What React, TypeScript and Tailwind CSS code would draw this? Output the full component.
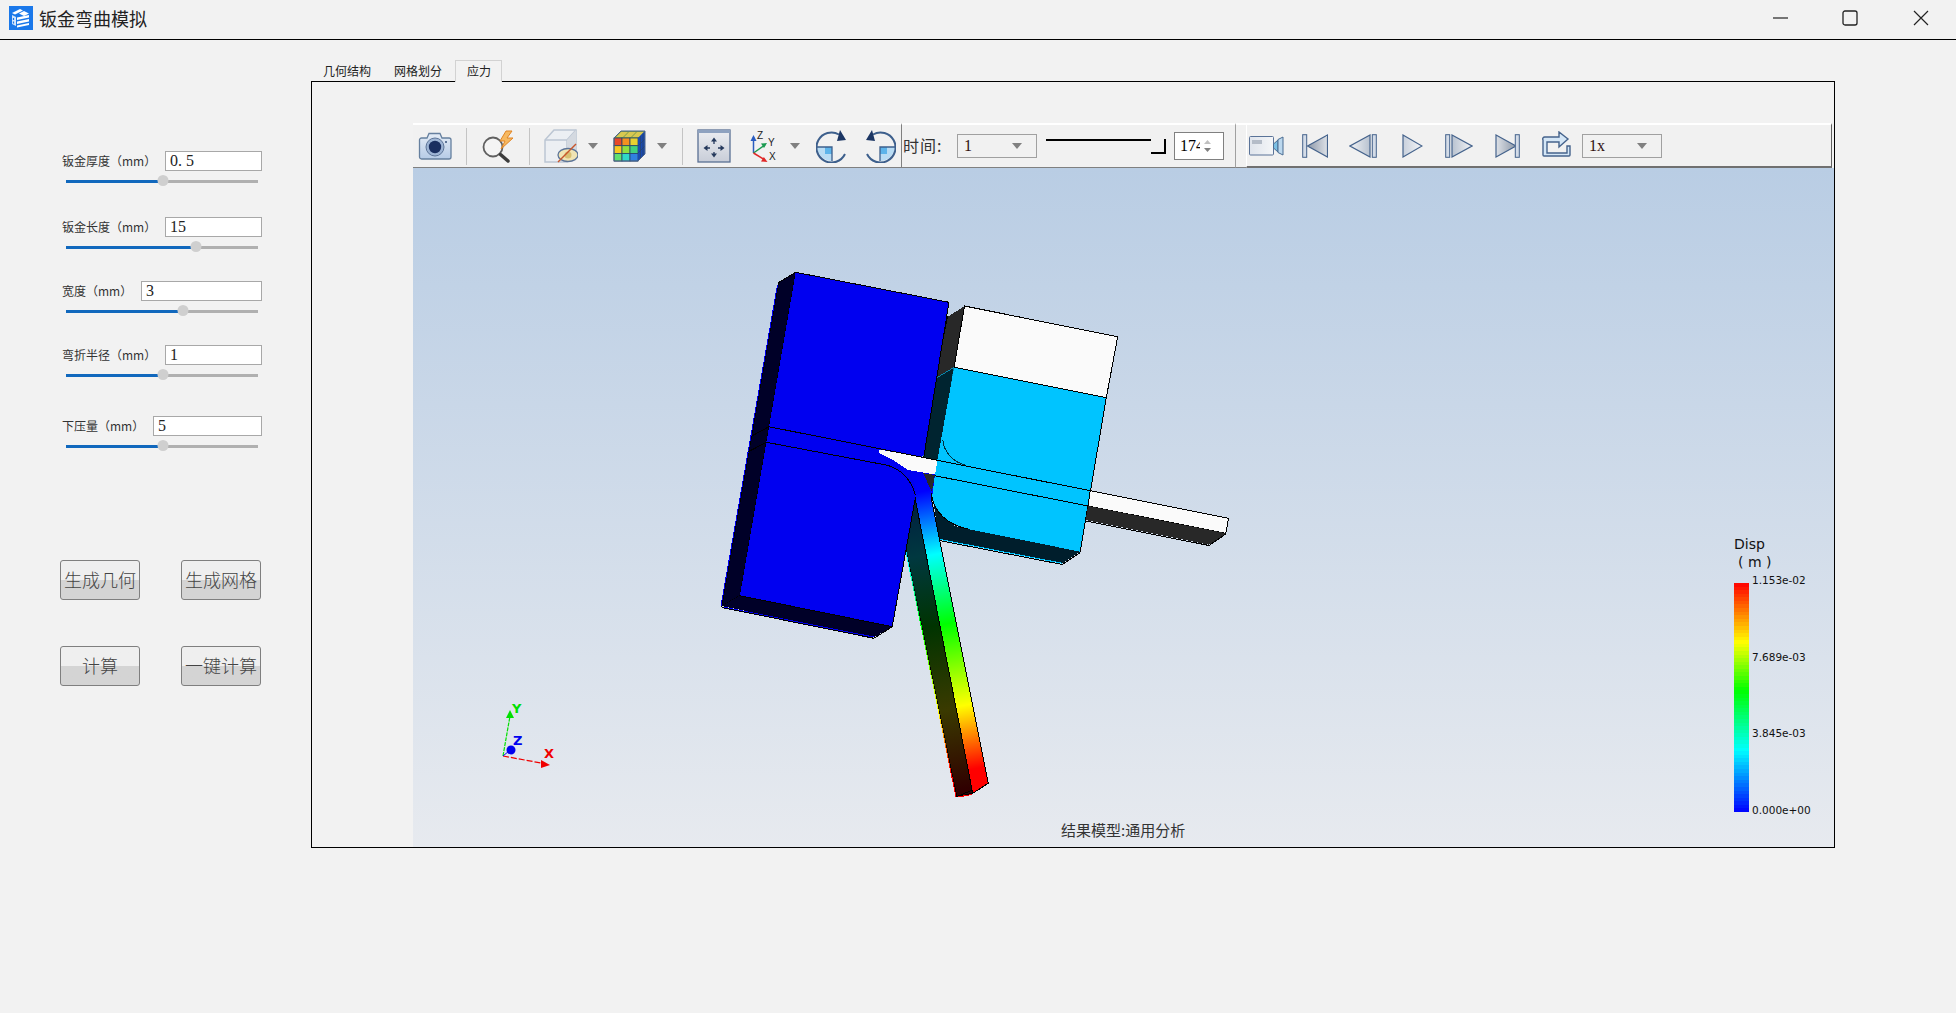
import React from "react";

const CJK = "font-['Noto_Sans_CJK_SC','Liberation_Sans',sans-serif]";
const SERIF = "font-['Liberation_Serif','Noto_Sans_CJK_SC',serif]";

const PARAMS = [
  { label: "钣金厚度（mm）", value: "0. 5", inputWidth: "w-[97px]", top: "mt-0", handle: 97 },
  { label: "钣金长度（mm）", value: "15", inputWidth: "w-[97px]", top: "mt-[26px]", handle: 130 },
  { label: "宽度（mm）", value: "3", inputWidth: "w-[121px]", top: "mt-[24px]", handle: 117 },
  { label: "弯折半径（mm）", value: "1", inputWidth: "w-[97px]", top: "mt-[24px]", handle: 97 },
  { label: "下压量（mm）", value: "5", inputWidth: "w-[109px]", top: "mt-[31px]", handle: 97 },
];

// jet colour ramp for the legend, t = 0 is blue and t = 1 is red
const jet = (t: number) => {
  const stops: [number, number[]][] = [
    [0, [0, 0, 255]],
    [0.27, [0, 255, 255]],
    [0.53, [0, 255, 0]],
    [0.74, [255, 255, 0]],
    [1, [255, 0, 0]],
  ];
  for (let i = 1; i < stops.length; i++) {
    if (t <= stops[i][0]) {
      const [a, ca] = stops[i - 1];
      const [b, cb] = stops[i];
      const k = (t - a) / (b - a);
      return `rgb(${ca.map((c, j) => Math.round(c + (cb[j] - c) * k)).join(",")})`;
    }
  }
  return "rgb(255,0,0)";
};

const Caret = ({ className = "" }: { className?: string }) => (
  <svg width="10" height="6" viewBox="0 0 10 6" className={className}>
    <path d="M0 0H10L5 6Z" fill="#808080" />
  </svg>
);

const Sep = ({ className = "" }: { className?: string }) => (
  <div className={`w-px h-[37px] bg-[#c4c4c4] ${className}`} />
);

const Combo = ({ value, className = "" }: { value: string; className?: string }) => (
  <div className={`w-20 h-6 border border-[#a0a0a0] flex items-center justify-between pl-1.5 pr-3.5 text-base text-[#301010] ${SERIF} ${className}`}>
    <span>{value}</span>
    <Caret />
  </div>
);

const Logo = () => (
  <svg width="24" height="24" viewBox="0 0 24 24" className="ml-[9px]">
    <rect width="24" height="24" fill="#1a78ea" />
    <path d="M3 7 11 3l3 1.500-8 4zM15 5l5 2.500-5 2.500-5-2.500z" fill="#ffffff" />
    <path d="M3 9l4 2v9l-4-2z" fill="#d5e6fb" />
    <path d="M8 11.500 20 9v2.500l-12 2.500zM8 15.500 20 13v2.500l-12 2.500zM8 19.500 20 17v2l-12 2.500z" fill="#ffffff" />
    <path d="M4.500 12v2M4.500 15.500v2" stroke="#1a78ea" strokeWidth="1.200" />
  </svg>
);

const WindowControls = () => (
  <div className="ml-auto flex items-center">
    <svg width="16" height="2" viewBox="0 0 16 2" className="mr-[53px]">
      <path d="M0 1H15" stroke="#222" strokeWidth="1.200" />
    </svg>
    <svg width="16" height="16" viewBox="0 0 16 16" className="mr-[55px]">
      <rect x="1" y="1" width="14" height="14" rx="2" fill="none" stroke="#222" strokeWidth="1.300" />
    </svg>
    <svg width="16" height="16" viewBox="0 0 16 16" className="mr-[27px]">
      <path d="M1 1 15 15M15 1 1 15" stroke="#222" strokeWidth="1.200" />
    </svg>
  </div>
);

const CameraIcon = ({ className = "" }: { className?: string }) => (
  <svg width="34" height="28" viewBox="0 0 34 28" className={className}>
    <defs>
      <linearGradient id="cam" x1="0" y1="0" x2="0" y2="1">
        <stop offset="0" stopColor="#e4ecf6" />
        <stop offset="1" stopColor="#b6cbe6" />
      </linearGradient>
    </defs>
    <path d="M1.500 8a2 2 0 0 1 2-2H9l2-4.500h11L24 6h7a2 2 0 0 1 2 2v17a2 2 0 0 1-2 2H3.500a2 2 0 0 1-2-2z" fill="url(#cam)" stroke="#66809f" strokeWidth="1.300" />
    <circle cx="17" cy="15" r="9" fill="#9db4d4" stroke="#5d7598" />
    <circle cx="17" cy="15" r="6.200" fill="#1a2f60" />
    <rect x="27" y="9" width="2" height="2" fill="#5d7598" />
  </svg>
);

const SearchBolt = ({ className = "" }: { className?: string }) => (
  <svg width="34" height="33" viewBox="0 0 34 33" className={className}>
    <circle cx="12" cy="17" r="9.500" fill="#f4f4f4" stroke="#606060" strokeWidth="1.800" />
    <path d="M19.500 24.500 27 31" stroke="#3c3c3c" strokeWidth="3.500" strokeLinecap="round" />
    <path d="M25 1 19 11h5l-4 8 12-11h-6l5-7z" fill="#f6b860" stroke="#e08424" />
  </svg>
);

const HiddenCube = ({ className = "" }: { className?: string }) => (
  <svg width="34" height="34" viewBox="0 0 34 34" className={className}>
    <path d="M1 11 10 1h22v20l-9 12H1z" fill="#eceff3" stroke="#bcc6d3" strokeWidth="1.500" />
    <path d="M1 11h22v22M23 11l9-10" fill="none" stroke="#bcc6d3" strokeWidth="1.500" />
    <path d="M23 11 32 1v20l-9 12z" fill="#d4d9e0" />
    <ellipse cx="24" cy="26" rx="10" ry="6.500" fill="#f0e4b4" stroke="#5d7598" strokeWidth="1.300" />
    <circle cx="24" cy="26" r="3.500" fill="#d8bf72" />
    <path d="M14 33 32 15" stroke="#c8562c" strokeWidth="1.500" />
  </svg>
);

const ColorCube = ({ className = "" }: { className?: string }) => {
  const cells = [
    ["#e84828", "#f49020", "#e8d030"],
    ["#f8c820", "#90e040", "#40d080"],
    ["#60e070", "#30d8c8", "#3080e0"],
  ];
  return (
    <svg width="33" height="32" viewBox="0 0 33 32" className={className}>
      <path d="M1 8 8 1h24v23l-7 7H1z" fill="#1f4f9e" />
      <path d="M1 8 8 1h24l-7 7z" fill="#7a9a50" />
      <path d="M3 7 8 2h7l-5 5zM11 7l5-5h7l-5 5zM19 7l5-5h7l-5 5z" fill="#d8c850" />
      {cells.map((row, y) =>
        row.map((c, x) => <rect key={`${x}-${y}`} x={1 + x * 8} y={8 + y * 7.700} width="8" height="7.700" fill={c} stroke="#2a4468" strokeWidth="0.800" />),
      )}
      <path d="M25 8 32 1v23l-7 7z" fill="#1a4ab0" />
      <path d="M25 16l7-7M25 23l7-7M27.500 6v22M30 3.500v22" stroke="#2a4468" strokeWidth="0.700" />
      <path d="M1 8 8 1h24v23l-7 7H1z" fill="none" stroke="#4c6488" />
    </svg>
  );
};

const FitView = ({ className = "" }: { className?: string }) => (
  <svg width="34" height="34" viewBox="0 0 34 34" className={className}>
    <defs>
      <linearGradient id="fit" x1="0" y1="0" x2="0" y2="1">
        <stop offset="0" stopColor="#eceef2" />
        <stop offset="1" stopColor="#c8cdd8" />
      </linearGradient>
    </defs>
    <rect x="1" y="1" width="32" height="32" fill="url(#fit)" stroke="#5a7094" strokeWidth="1.300" />
    <rect x="1" y="1" width="32" height="3" fill="#8ea2c0" />
    <path d="M17 12v3M17 23v3M9 19h4M21 19h4" stroke="#25395c" strokeWidth="1.300" />
    <path d="M17 8.500l-3 4h6zM17 28.500l-3-4h6zM6.500 19l4-3v6zM27.500 19l-4-3v6z" fill="#25395c" />
  </svg>
);

const AxesIcon = ({ className = "" }: { className?: string }) => (
  <svg width="28" height="34" viewBox="0 0 28 34" className={className}>
    <path d="M3.500 24V8" stroke="#2a5cc0" strokeWidth="1.500" />
    <path d="M3.500 6 0.500 12h6z" fill="#2a5cc0" />
    <path d="M3.500 24 15 16" stroke="#1a9a50" strokeWidth="1.500" />
    <path d="M17 14l-6 .500 3 4.500z" fill="#1a9a50" />
    <path d="M3.500 24 15 31" stroke="#e02828" strokeWidth="1.500" />
    <path d="M17.500 33l-6.500-.500 2.800-4.500z" fill="#e02828" />
    <text x="7" y="10" fontSize="10" fontFamily="Liberation Sans" fill="#222">Z</text>
    <text x="18" y="17" fontSize="10" fontFamily="Liberation Sans" fill="#222">Y</text>
    <text x="19" y="31" fontSize="10" fontFamily="Liberation Sans" fill="#222">X</text>
  </svg>
);

const RotateCw = ({ className = "", flip = false }: { className?: string; flip?: boolean }) => (
  <svg width="32" height="34" viewBox="0 0 32 34" className={`${flip ? "-scale-x-100" : ""} ${className}`}>
    <path d="M16 18v14a15 15 0 0 1-15-14z" fill="#b8dcf4" />
    <path d="M16 18h-7v7h7z" fill="#5db4ea" />
    <path d="M1 18h15v14" fill="none" stroke="#3d5f8c" strokeWidth="1.300" />
    <path d="M23 5.500A15 15 0 1 0 29 25" fill="none" stroke="#3d5f8c" strokeWidth="2" />
    <path d="M30 11 21 12l3-11z" fill="#1c3664" />
  </svg>
);

const VideoIcon = ({ className = "" }: { className?: string }) => (
  <svg width="35" height="20" viewBox="0 0 35 20" className={className}>
    <defs>
      <linearGradient id="vid" x1="0" y1="0" x2="1" y2="0">
        <stop offset="0" stopColor="#dfe4ec" />
        <stop offset="1" stopColor="#f4f6f8" />
      </linearGradient>
    </defs>
    <rect x="0.500" y="0.500" width="24" height="18.500" rx="1" fill="url(#vid)" stroke="#5a7398" />
    <rect x="3" y="4" width="10" height="4" fill="#b4bcc8" />
    <path d="M24.500 8 29 4v12l-4.500-4z" fill="#7bc0e4" stroke="#4a6c92" />
    <path d="M29 3.500 34 1v18l-5-2.500z" fill="#bcd8ee" stroke="#4a6c92" />
  </svg>
);

const SkipStart = ({ className = "" }: { className?: string }) => (
  <svg width="26" height="24" viewBox="0 0 26 24" className={className}>
    <defs>
      <linearGradient id="skipA" x1="0" y1="0" x2="1" y2="0">
        <stop offset="0" stopColor="#8d98a8" />
        <stop offset="1" stopColor="#dde1e7" />
      </linearGradient>
    </defs>
    <rect x="0.700" y="0.700" width="4" height="22.600" fill="#d4dce8" stroke="#45638c" />
    <path d="M25.500 1 5.500 12l20 11z" fill="url(#skipA)" stroke="#45638c" strokeWidth="1.200" />
  </svg>
);

const StepBack = ({ className = "" }: { className?: string }) => (
  <svg width="28" height="24" viewBox="0 0 28 24" className={className}>
    <defs>
      <linearGradient id="stepA" x1="0" y1="0" x2="1" y2="0">
        <stop offset="0" stopColor="#f2f3f5" />
        <stop offset="1" stopColor="#b8c2d0" />
      </linearGradient>
    </defs>
    <path d="M21 1 1 12l20 11z" fill="url(#stepA)" stroke="#45638c" strokeWidth="1.200" />
    <rect x="23.300" y="0.700" width="4" height="22.600" fill="#d4dce8" stroke="#45638c" />
  </svg>
);

const PlayIcon = ({ className = "" }: { className?: string }) => (
  <svg width="21" height="24" viewBox="0 0 21 24" className={className}>
    <defs>
      <linearGradient id="playA" x1="0" y1="0" x2="1" y2="0">
        <stop offset="0" stopColor="#c8d0dc" />
        <stop offset="1" stopColor="#f4f5f7" />
      </linearGradient>
    </defs>
    <path d="M1 1 20 12 1 23z" fill="url(#playA)" stroke="#45638c" strokeWidth="1.200" />
  </svg>
);

const StepForward = ({ className = "" }: { className?: string }) => (
  <svg width="28" height="24" viewBox="0 0 28 24" className={className}>
    <defs>
      <linearGradient id="stepB" x1="0" y1="0" x2="1" y2="0">
        <stop offset="0" stopColor="#b8c2d0" />
        <stop offset="1" stopColor="#f2f3f5" />
      </linearGradient>
    </defs>
    <rect x="0.700" y="0.700" width="4" height="22.600" fill="#d4dce8" stroke="#45638c" />
    <path d="M7 1 27 12 7 23z" fill="url(#stepB)" stroke="#45638c" strokeWidth="1.200" />
  </svg>
);

const SkipEnd = ({ className = "" }: { className?: string }) => (
  <svg width="25" height="24" viewBox="0 0 25 24" className={className}>
    <defs>
      <linearGradient id="skipB" x1="0" y1="0" x2="1" y2="0">
        <stop offset="0" stopColor="#dde1e7" />
        <stop offset="1" stopColor="#8d98a8" />
      </linearGradient>
    </defs>
    <path d="M1 1 21 12 1 23z" fill="url(#skipB)" stroke="#45638c" strokeWidth="1.200" />
    <rect x="20.300" y="0.700" width="4" height="22.600" fill="#d4dce8" stroke="#45638c" />
  </svg>
);

const ExportIcon = ({ className = "" }: { className?: string }) => (
  <svg width="29" height="26" viewBox="0 0 29 26" className={className}>
    <path d="M1 9v15a1 1 0 0 0 1 1h25a1 1 0 0 0 1-1v-9h-3v7H5V11h12v5l9-8-9-7v5H3a2 2 0 0 0-2 3z" fill="#d4e6f6" stroke="#45638c" strokeWidth="1.400" />
  </svg>
);

const Model = () => (
  <svg width="1421" height="679" viewBox="413 168 1421 679" shapeRendering="crispEdges" className="absolute inset-0">
    <defs>
      <linearGradient id="jetBar" gradientUnits="userSpaceOnUse" x1="915" y1="470" x2="975" y2="785">
        <stop offset="0" stopColor="#0000f0" />
        <stop offset="0.07" stopColor="#0000ff" />
        <stop offset="0.27" stopColor="#00ffff" />
        <stop offset="0.49" stopColor="#00ff00" />
        <stop offset="0.75" stopColor="#ffff00" />
        <stop offset="0.95" stopColor="#ff0000" />
      </linearGradient>
      <linearGradient id="jetDark" gradientUnits="userSpaceOnUse" x1="905" y1="470" x2="958" y2="790">
        <stop offset="0" stopColor="#001040" />
        <stop offset="0.27" stopColor="#003840" />
        <stop offset="0.49" stopColor="#003400" />
        <stop offset="0.75" stopColor="#3a3a00" />
        <stop offset="1" stopColor="#300000" />
      </linearGradient>
    </defs>

    {/* back plate */}
    <polygon points="947.900,316.700 945,319 933,380 935.900,378.300" fill="#fafafa" stroke="#000" />
    <polygon points="947.900,316.700 964.500,306 954.100,367.300 935.900,378.300" fill="#282828" />
    <polygon points="964.500,306 1117.700,336.700 1106.300,397.700 954.100,367.300" fill="#fafafa" stroke="#000" />
    <polygon points="935.900,378.300 954.100,367.300 937,478 921,470" fill="#002430" stroke="#00c4ff" strokeWidth="0.600" />
    <polygon points="931.400,490 954.800,526 1080.200,551.700 1062.300,563.300 939.300,539.300" fill="#001e2c" />
    <path d="M939.300 539.300 1062.300 563.300" stroke="#00c4ff" fill="none" />
    <path d="M939.300 540.500 1062.300 564.500 1080.200 552.500" stroke="#000" fill="none" />
    <path d="M954.100 367.300 1106.300 397.700 1080.200 551.700 968 529 C948 525 933 512 931.400 493 L942.800 430 Z" fill="#00c4ff" />
    <path d="M954.100 367.300 1106.300 397.700 1080.200 551.700" fill="none" stroke="#000" />
    <path d="M942.800 440 C944 452 953 462 965.200 465" fill="none" stroke="#003040" />

    {/* strip sticking out on the right */}
    <polygon points="1090.200,490.700 1228.600,518.300 1225.800,533.300 1088.100,506" fill="#fafafa" stroke="#000" />
    <polygon points="1088.100,506 1225.800,533.300 1209,544.700 1085.700,520" fill="#282828" />
    <path d="M1085.700 521 1209 545.500 1225.800 534" stroke="#000" fill="none" />

    {/* bent leg */}
    <polygon points="915,498 972.700,793.300 956.700,796.700 905,545 908,530" fill="url(#jetDark)" stroke="#000" />
    <path d="M905 547 956 797" stroke="url(#jetBar)" strokeWidth="1" fill="none" />
    <polygon points="956.700,796.700 972.700,793.300 988.300,783.300" fill="#2a0606" stroke="#000" />
    <path d="M958 797 972 794.500" stroke="#ff0000" fill="none" />
    <polygon points="900,460 935,474 931.700,500 988.300,783.300 972.700,793.300 915,498" fill="url(#jetBar)" />
    <path d="M931 497 988.300 783.300 972.700 793.300 915 498" fill="none" stroke="#000" />
    <polygon points="923.300,473.300 935,475 931.700,491.700" fill="#282828" />

    {/* front plate */}
    <polygon points="778.500,282.700 795.700,272.300 739.900,595.700 721.700,606" fill="#000028" stroke="#000" />
    <path d="M777.500 285 721 606" stroke="#0000f0" fill="none" />
    <polygon points="721.700,606 739.900,595.700 892.200,626.700 873.900,637.300" fill="#000028" />
    <path d="M722.500 607 873.500 637" stroke="#0000f0" fill="none" />
    <path d="M721.700 607.500 873.900 638.300 892.200 626.700" stroke="#000" fill="none" />
    <path d="M795.700 272.300 949 302.300 923.800 455 906 470 C912 475 917 485 915 497 L892.200 626.700 739.900 595.700 Z" fill="#0000f0" />
    <path d="M778.500 282.700 795.700 272.300 949 302.300 923.800 457" fill="none" stroke="#000" />
    <path d="M915.500 497 892.200 626.700 739.900 595.700" fill="none" stroke="#000" />
    <polygon points="879,449.500 937.500,460 935,474.500 908,470 893,460 879,453" fill="#fafafa" />

    {/* fold lines */}
    <path d="M751.700 436 768.900 426.700 1090.200 490.700" fill="none" stroke="#000" />
    <path d="M748.200 451.700 766.500 442.300 886 465 C900 468 912 480 915.200 495" fill="none" stroke="#000" />
    <path d="M934.800 475.700 1088.100 506" fill="none" stroke="#000" />
    <path d="M931.400 493 C933 512 948 525 968 529" fill="none" stroke="#000" />

    {/* triad */}
    <g shapeRendering="auto">
      <path d="M503 756 510 716" stroke="#00e000" strokeWidth="1.200" strokeDasharray="4 1" />
      <path d="M510 710 506 718 514 718z" fill="#00e000" />
      <path d="M503 756 541 763" stroke="#f00000" strokeWidth="1.200" strokeDasharray="6 2" />
      <path d="M550 765 541 760 541 768z" fill="#f00000" />
      <path d="M503 756 509 751" stroke="#0000f0" />
      <circle cx="511" cy="750" r="4.500" fill="#0000f0" />
      <text x="512" y="713" fontSize="13" fontWeight="700" fontFamily="DejaVu Sans" fill="#00e000">Y</text>
      <text x="513" y="745" fontSize="13" fontWeight="700" fontFamily="DejaVu Sans" fill="#0000f0">Z</text>
      <text x="544" y="758" fontSize="13" fontWeight="700" fontFamily="DejaVu Sans" fill="#f00000">X</text>
    </g>
  </svg>
);

const Legend = () => {
  const bands = Array.from({ length: 64 }, (_, i) => i);
  const labels = ["1.153e-02", "7.689e-03", "3.845e-03", "0.000e+00"];
  return (
    <div className="absolute left-[1321px] top-[367px] w-[90px] font-['DejaVu_Sans',sans-serif] text-[#111]">
      <div className="text-sm leading-[18px]">Disp</div>
      <div className="text-sm leading-[18px] pl-1 whitespace-pre">( m )</div>
      <div className="flex mt-3 h-[229px]">
        <svg width="15" height="229" viewBox="0 0 15 229" shapeRendering="crispEdges">
          {bands.map((i) => (
            <rect key={i} x="0" y={(i * 229) / 64} width="15" height={229 / 64 + 0.5} fill={jet(1 - (i + 0.5) / 64)} />
          ))}
        </svg>
        <div className="flex flex-col justify-between -mt-[9px] -mb-[5px] ml-[3px] text-[10.5px] leading-[13px]">
          {labels.map((l) => (
            <span key={l}>{l}</span>
          ))}
        </div>
      </div>
    </div>
  );
};

const Toolbar = () => (
  <div className="h-[45px] flex bg-[#f1f1f1]">
    <div className="w-[489px] h-full shrink-0 flex items-center border-t-2 border-t-white border-b border-b-[#808080] border-r border-r-[#808080]">
      <CameraIcon className="ml-[5px]" />
      <Sep className="ml-[14px]" />
      <SearchBolt className="ml-[14px]" />
      <Sep className="ml-[14px]" />
      <HiddenCube className="ml-[14px]" />
      <Caret className="ml-[10px]" />
      <ColorCube className="ml-[15px]" />
      <Caret className="ml-[11px]" />
      <Sep className="ml-[15px]" />
      <FitView className="ml-[14px]" />
      <AxesIcon className="ml-[19px]" />
      <Caret className="ml-[12px]" />
      <RotateCw className="ml-[16px]" />
      <RotateCw flip className="ml-[16px]" />
    </div>
    <div className="w-[334px] h-full shrink-0 flex items-center border-t-2 border-t-white border-b border-b-[#808080] border-r border-r-[#a0a0a0]">
      <span className={`ml-[1px] w-[54px] -mt-[2px] text-base tracking-[1px] text-[#333] ${CJK}`}>时间:</span>
      <Combo value="1" />
      <div className="ml-[9px] w-[120px] h-[15px] flex">
        <div className="w-[105px] h-[2px] bg-black" />
        <div className="w-[15px] h-[15px] border-r-2 border-b-2 border-black bg-[#f1f1f1]" />
      </div>
      <div className={`ml-[8px] w-[50px] h-7 border border-[#808080] bg-white flex items-center pl-[5px] text-base text-black ${SERIF}`}>
        <span className="w-[20px] overflow-hidden">174</span>
        <div className="ml-auto mr-[12px] flex flex-col gap-[4px]">
          <svg width="7" height="4" viewBox="0 0 7 4"><path d="M0 4 3.500 0 7 4z" fill="#c0c0c0" /></svg>
          <svg width="7" height="4" viewBox="0 0 7 4"><path d="M0 0 3.500 4 7 0z" fill="#808080" /></svg>
        </div>
      </div>
    </div>
    <div className="w-[10px] h-full shrink-0 border-t-2 border-t-white border-b border-b-[#808080]" />
    <div className="flex-1 h-full mr-[2px] flex items-center border-t-2 border-t-white border-l border-l-white border-b-2 border-b-[#707070] border-r border-r-[#606060]">
      <VideoIcon className="ml-[2px]" />
      <SkipStart className="ml-[18px]" />
      <StepBack className="ml-[21px]" />
      <PlayIcon className="ml-[25px]" />
      <StepForward className="ml-[22px]" />
      <SkipEnd className="ml-[22px]" />
      <ExportIcon className="ml-[22px] -mt-[3px]" />
      <Combo value="1x" className="ml-[11px]" />
    </div>
  </div>
);

const ActionButton = ({ text }: { text: string }) => (
  <button className={`w-20 h-10 pb-[3px] rounded-[3px] border border-[#7f7f7f] bg-linear-to-b from-[#efefef] from-50% to-[#d4d4d4] to-50% text-[18px] leading-none font-light text-[#444] ${CJK}`}>
    {text}
  </button>
);

export default function App() {
  return (
    <div className={`w-[1956px] h-[1013px] overflow-hidden bg-[#f2f2f2] flex flex-col ${CJK}`}>
      <div className="h-10 shrink-0 flex items-center border-b border-black pb-[3px]">
        <Logo />
        <span className="ml-[6px] text-[18px] text-[#222]">钣金弯曲模拟</span>
        <WindowControls />
      </div>

      <div className="flex">
        <div className="w-[311px] shrink-0 pl-[62px] pr-[49px] pt-[111px]">
          {PARAMS.map((p) => (
            <div key={p.label} className={p.top}>
              <div className="flex items-center justify-between h-5">
                <span className="text-xs text-[#333] whitespace-nowrap">{p.label}</span>
                <div className={`${p.inputWidth} h-5 bg-white border border-[#a8a8a8] pl-1 flex items-center text-base text-[#222] ${SERIF}`}>
                  {p.value}
                </div>
              </div>
              <div className="relative h-5 ml-1 mr-1 flex items-center">
                <div className="w-full h-[3px] bg-[#b0b0b0]">
                  <div className="h-full bg-[#1168bd]" style={{ width: p.handle }} />
                </div>
                <div className="absolute top-[4px] w-[11px] h-[11px] rounded-full bg-[#cfcfcf] -translate-x-1/2" style={{ left: p.handle }} />
              </div>
            </div>
          ))}
          <div className="mt-[104px] -ml-[2px] grid grid-cols-[80px_80px] gap-x-[41px] gap-y-[46px]">
            <ActionButton text="生成几何" />
            <ActionButton text="生成网格" />
            <ActionButton text="计算" />
            <ActionButton text="一键计算" />
          </div>
        </div>

        <div className="w-[1524px] shrink-0 pt-5">
          <div className="flex h-[21px] items-start text-xs text-[#222]">
            <div className="w-[72px] h-[21px] pl-3 flex items-center">几何结构</div>
            <div className="w-[72px] h-[21px] pl-[11px] flex items-center">网格划分</div>
            <div className="relative z-10 w-[47px] h-[22px] pl-[11px] pb-px flex items-center border border-b-0 border-[#d2d2d2] bg-[#f2f2f2]">应力</div>
          </div>
          <div className="h-[767px] border border-black pl-[101px] pt-[41px]">
            <Toolbar />
            <div className="relative h-[679px] bg-linear-to-b from-[#b9cde4] to-[#e7eaef]">
              <Model />
              <Legend />
              <div className="absolute bottom-[7px] left-[648px] text-[15px] leading-5 text-[#333]">结果模型:通用分析</div>
            </div>
          </div>
        </div>
      </div>
    </div>
  );
}
